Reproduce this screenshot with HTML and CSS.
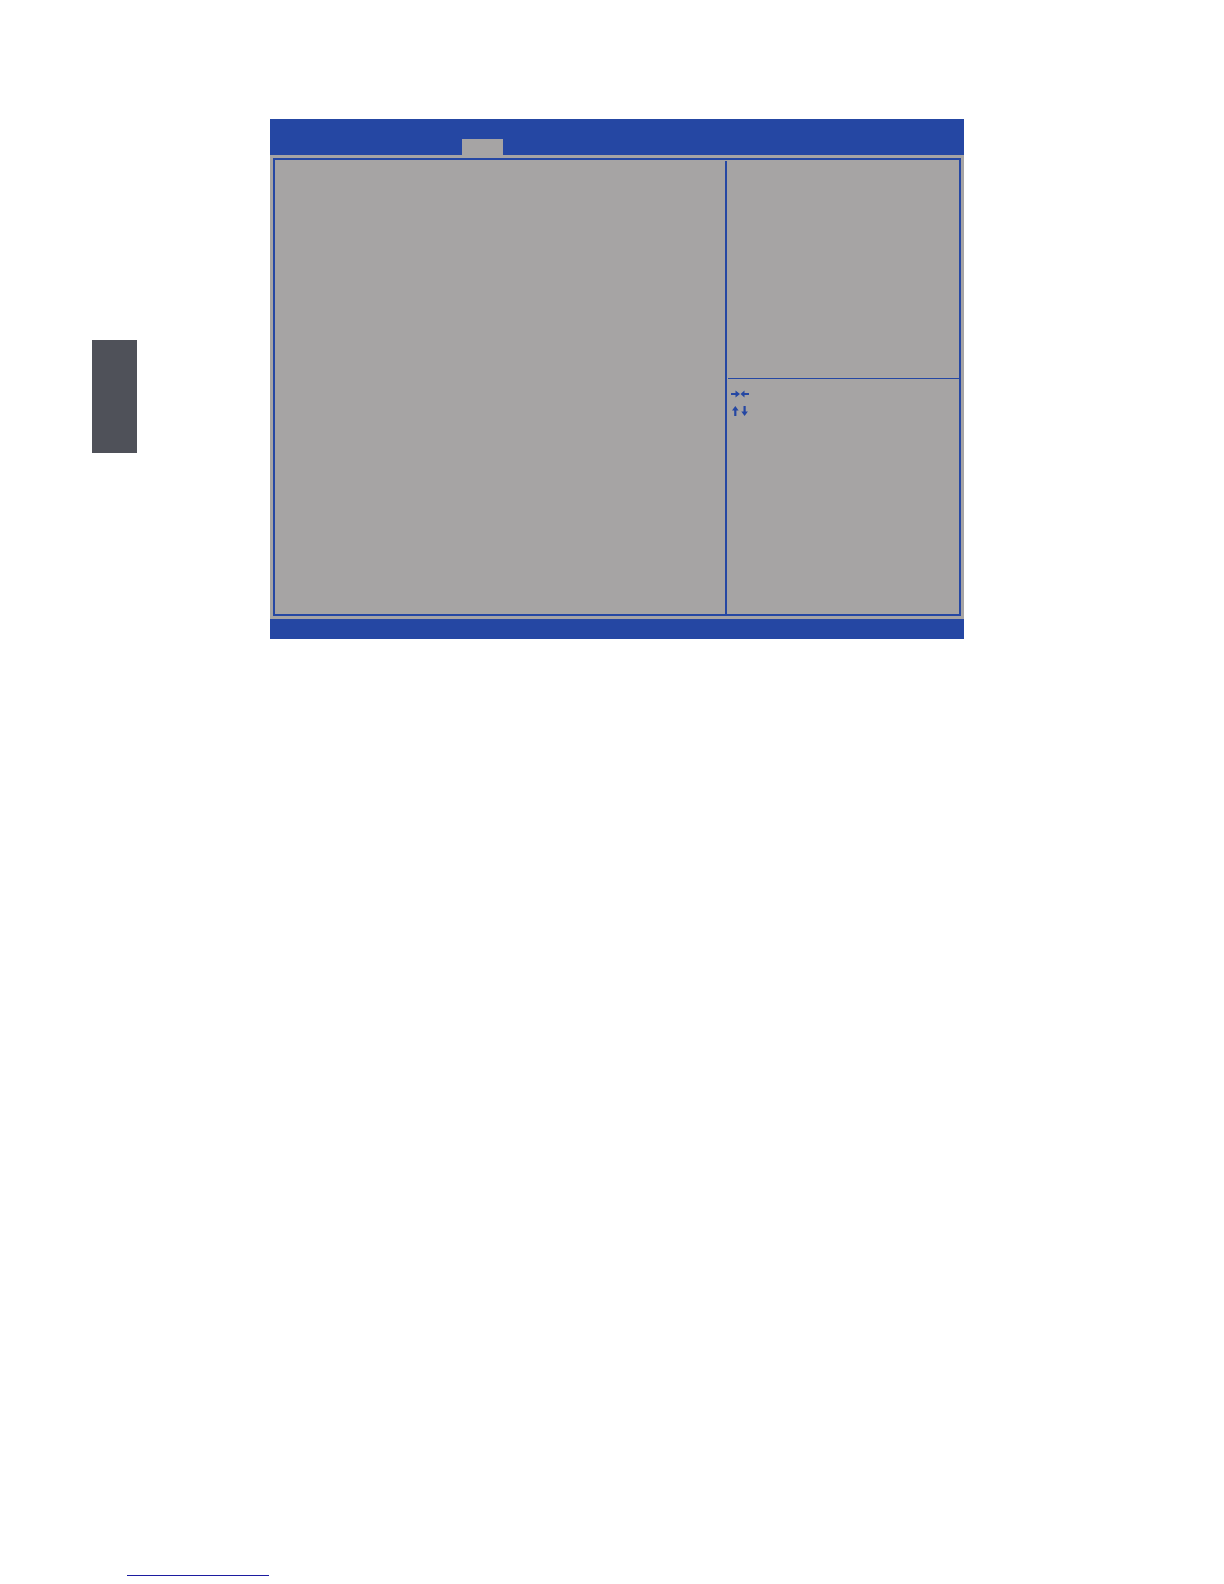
FILE: index.html
```html
<!DOCTYPE html>
<html lang="en">
<head>
    <meta charset="UTF-8">
    <meta name="viewport" content="width=device-width, initial-scale=1.0">
    <title>BIOS Setup</title>
    <link rel="stylesheet" href="styles.css">
</head>
<body>
    <main class="sheet">
        <div class="side-tab"></div>

        <section class="bios">
            <header class="bios-header">
                <div class="bios-tab"></div>
            </header>

            <div class="bios-body">
                <div class="bios-frame">
                    <div class="settings"></div>
                    <aside class="sidebar">
                        <div class="help"></div>
                        <!-- Navigation keys -->
                        <div class="keys">
                            <svg class="key-icon" viewBox="0 0 18 10">
                                <path d="M0 4h4.500V1.500L9 5 4.500 8.500V6H0zM18 4h-4.500V1.500L9.500 5l4 3.500V6H18z"/>
                            </svg>
                            <svg class="key-icon" viewBox="0 0 18 10">
                                <path d="M3.200 10V4.500H1L4.300 0l3.300 4.500H5.400V10zM12.500 0v5.500h-2.200l3.300 4.500 3.300-4.500h-2.200V0z"/>
                            </svg>
                        </div>
                    </aside>
                </div>
            </div>

            <footer class="bios-footer"></footer>
        </section>
    </main>

    <footer class="page-footer">
        <hr class="footer-line">
    </footer>
</body>
</html>
```

FILE: styles.css
```css
* {
    box-sizing: border-box;
}

body {
    display: flex;
    flex-direction: column;
    min-height: 100vh;
    margin: 0;
    background-color: #fff;
    font-family: "Liberation Sans", Arial, sans-serif;
}

.sheet {
    display: flex;
    align-items: flex-start;
    gap: 133px;
    flex: 1;
    padding: 119px 260px 0 92px;
}

.side-tab {
    width: 45px;
    height: 113px;
    margin-top: 221px;
    background-color: #4f5159;
}

/* BIOS screen */
.bios {
    flex: 1;
    background-color: #a6a4a4;
}

.bios-header {
    display: flex;
    align-items: flex-end;
    height: 36px;
    padding-left: 192px;
    background-color: #2547a3;
}

.bios-tab {
    width: 41px;
    height: 16px;
    background-color: #a6a4a4;
}

.bios-body {
    padding: 3px;
}

.bios-frame {
    display: flex;
    min-height: 458px;
    padding-top: 1px;
    border: 2px solid #2547a3;
}

.settings {
    flex: 1;
}

.sidebar {
    width: 234px;
    padding-left: 1px;
    border-left: 2px solid #2547a3;
}

.help {
    height: 218px;
    border-bottom: 1px solid #2547a3;
}

.keys {
    display: flex;
    flex-direction: column;
    gap: 7px;
    padding: 10px 3px;
}

.key-icon {
    width: 18px;
    height: 10px;
    fill: #2547a3;
}

.bios-footer {
    height: 20px;
    background-color: #2547a3;
}

.page-footer {
    padding: 0 127px 8px;
}

.footer-line {
    width: 142px;
    height: 1px;
    margin: 0;
    border: none;
    background-color: #1c1ca0;
}
```
